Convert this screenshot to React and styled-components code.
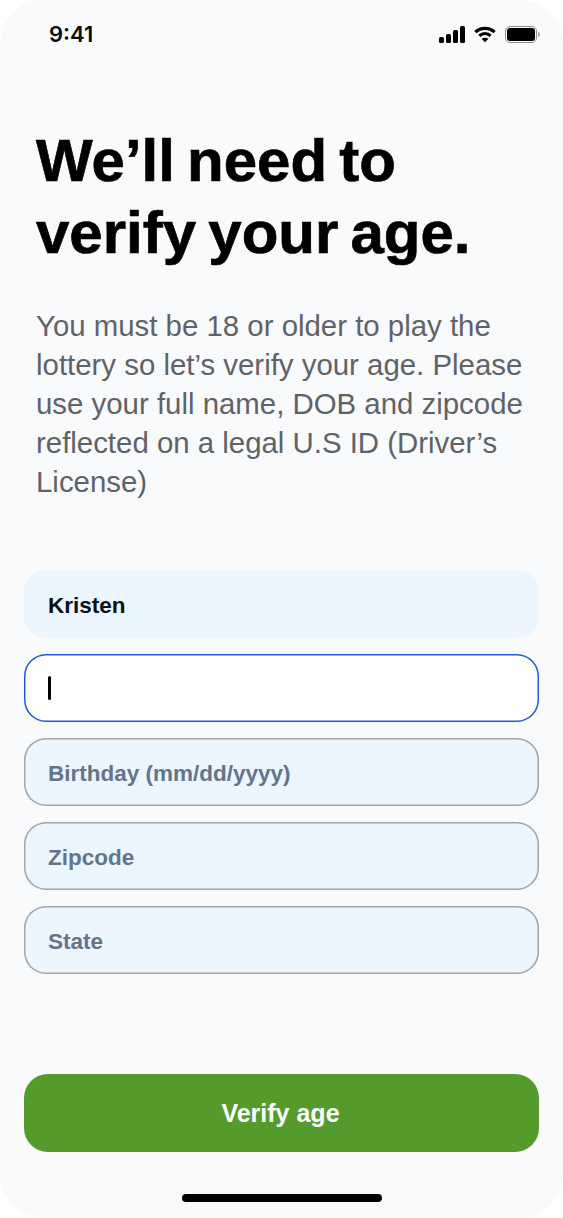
import React from "react";
import styled, { createGlobalStyle } from "styled-components";

const GlobalStyle = createGlobalStyle`
  html, body {
    margin: 0;
    padding: 0;
    background: #fff;
  }
  * {
    box-sizing: border-box;
  }
`;

const Screen = styled.div`
  width: 563px;
  height: 1218px;
  background: #f9fafc;
  border-radius: 44px;
  padding: 0 24px;
  display: flex;
  flex-direction: column;
  font-family: "Liberation Sans", Arial, sans-serif;
  overflow: hidden;
`;

const StatusBar = styled.div`
  height: 68px;
  padding: 0 0 0 25px;
  display: flex;
  align-items: center;
  justify-content: space-between;
`;

const Clock = styled.span`
  font-family: Inter, sans-serif;
  font-size: 22px;
  font-weight: 600;
  color: #0a0a0a;
`;

const StatusIcons = styled.div`
  display: flex;
  align-items: center;
  gap: 9px;
  margin-right: -1px;
`;

const Intro = styled.div`
  padding: 57px 12px 0;
`;

const Title = styled.h1`
  margin: 0;
  font-size: 60px;
  line-height: 72px;
  font-weight: 700;
  word-spacing: -4.5px;
  white-space: nowrap;
  -webkit-text-stroke: 0.7px #000;
  color: #000;
`;

const Lead = styled.p`
  margin: 37px 0 0;
  font-size: 29.4px;
  line-height: 39px;
  font-weight: 400;
  white-space: nowrap;
  color: #5f6368;
`;

const Form = styled.form`
  margin-top: 69px;
  display: flex;
  flex-direction: column;
  gap: 16px;
`;

const Field = styled.div`
  height: 68px;
  padding: 4px 24px 0;
  display: flex;
  align-items: center;
  border-radius: 22px;
  font-size: 22.5px;
  font-weight: 700;
  background: ${(p) => (p.$focused ? "#fff" : "#ebf6ff")};
  box-shadow: inset 0 0 0 1.5px
    ${(p) => (p.$focused ? "#2458e0" : p.$plain ? "#ebf6ff" : "#a3a5a8")};
  color: ${(p) => (p.$plain ? "#0a0f1a" : "#64748b")};
`;

const Caret = styled.span`
  width: 3px;
  height: 24px;
  margin-top: -4px;
  border-radius: 2px;
  background: #000;
`;

const Spacer = styled.div`
  flex: 1;
`;

const SubmitButton = styled.button`
  height: 78px;
  padding: 1px 2px 0 0;
  border: none;
  border-radius: 24px;
  background: #549b2c;
  color: #fff;
  font-family: inherit;
  font-size: 25px;
  font-weight: 700;
`;

const HomeRow = styled.div`
  height: 66px;
  display: flex;
  justify-content: center;
  padding-top: 42px;
`;

const HomeBar = styled.div`
  width: 200px;
  height: 8px;
  border-radius: 4px;
  background: #000;
`;

function SignalIcon() {
  return (
    <svg width="26" height="17" viewBox="0 0 26 17" fill="#000">
      <rect x="0" y="11" width="5" height="6" rx="1.5" />
      <rect x="7" y="8" width="5" height="9" rx="1.5" />
      <rect x="14" y="4" width="5" height="13" rx="1.5" />
      <rect x="21" y="0" width="5" height="17" rx="1.5" />
    </svg>
  );
}

function WifiIcon() {
  return (
    <svg width="22" height="17" viewBox="0 0 24 17" fill="none" stroke="#000" strokeWidth="3.4">
      <path d="M1.5 6 C7.5 0.5 16.5 0.5 22.5 6" />
      <path d="M5.8 10 C9.5 6.8 14.5 6.8 18.2 10" />
      <path d="M12 17 L8.2 13.2 C10.4 11.6 13.6 11.6 15.8 13.2 Z" fill="#000" stroke="none" />
    </svg>
  );
}

function BatteryIcon() {
  return (
    <svg width="35" height="17" viewBox="0 0 35 17">
      <rect x="0.5" y="0.5" width="31" height="16" rx="4.5" fill="none" stroke="#8f8f8f" />
      <rect x="2" y="2" width="28" height="13" rx="3" fill="#000" />
      <path d="M33 6 C34.2 6.5 34.8 7.5 34.8 8.5 C34.8 9.5 34.2 10.5 33 11 Z" fill="#9a9a9a" />
    </svg>
  );
}

export default function App() {
  return (
    <>
      <GlobalStyle />
      <Screen>
        <StatusBar>
          <Clock>9:41</Clock>
          <StatusIcons>
            <SignalIcon />
            <WifiIcon />
            <BatteryIcon />
          </StatusIcons>
        </StatusBar>
        <Intro>
          <Title>
            We’ll need to
            <br />
            verify your age.
          </Title>
          <Lead>
            You must be 18 or older to play the
            <br />
            lottery so let’s verify your age. Please
            <br />
            use your full name, DOB and zipcode
            <br />
            reflected on a legal U.S ID (Driver’s
            <br />
            License)
          </Lead>
        </Intro>
        <Form>
          <Field $plain>Kristen</Field>
          <Field $focused>
            <Caret />
          </Field>
          <Field>Birthday (mm/dd/yyyy)</Field>
          <Field>Zipcode</Field>
          <Field>State</Field>
        </Form>
        <Spacer />
        <SubmitButton type="button">Verify age</SubmitButton>
        <HomeRow>
          <HomeBar />
        </HomeRow>
      </Screen>
    </>
  );
}
